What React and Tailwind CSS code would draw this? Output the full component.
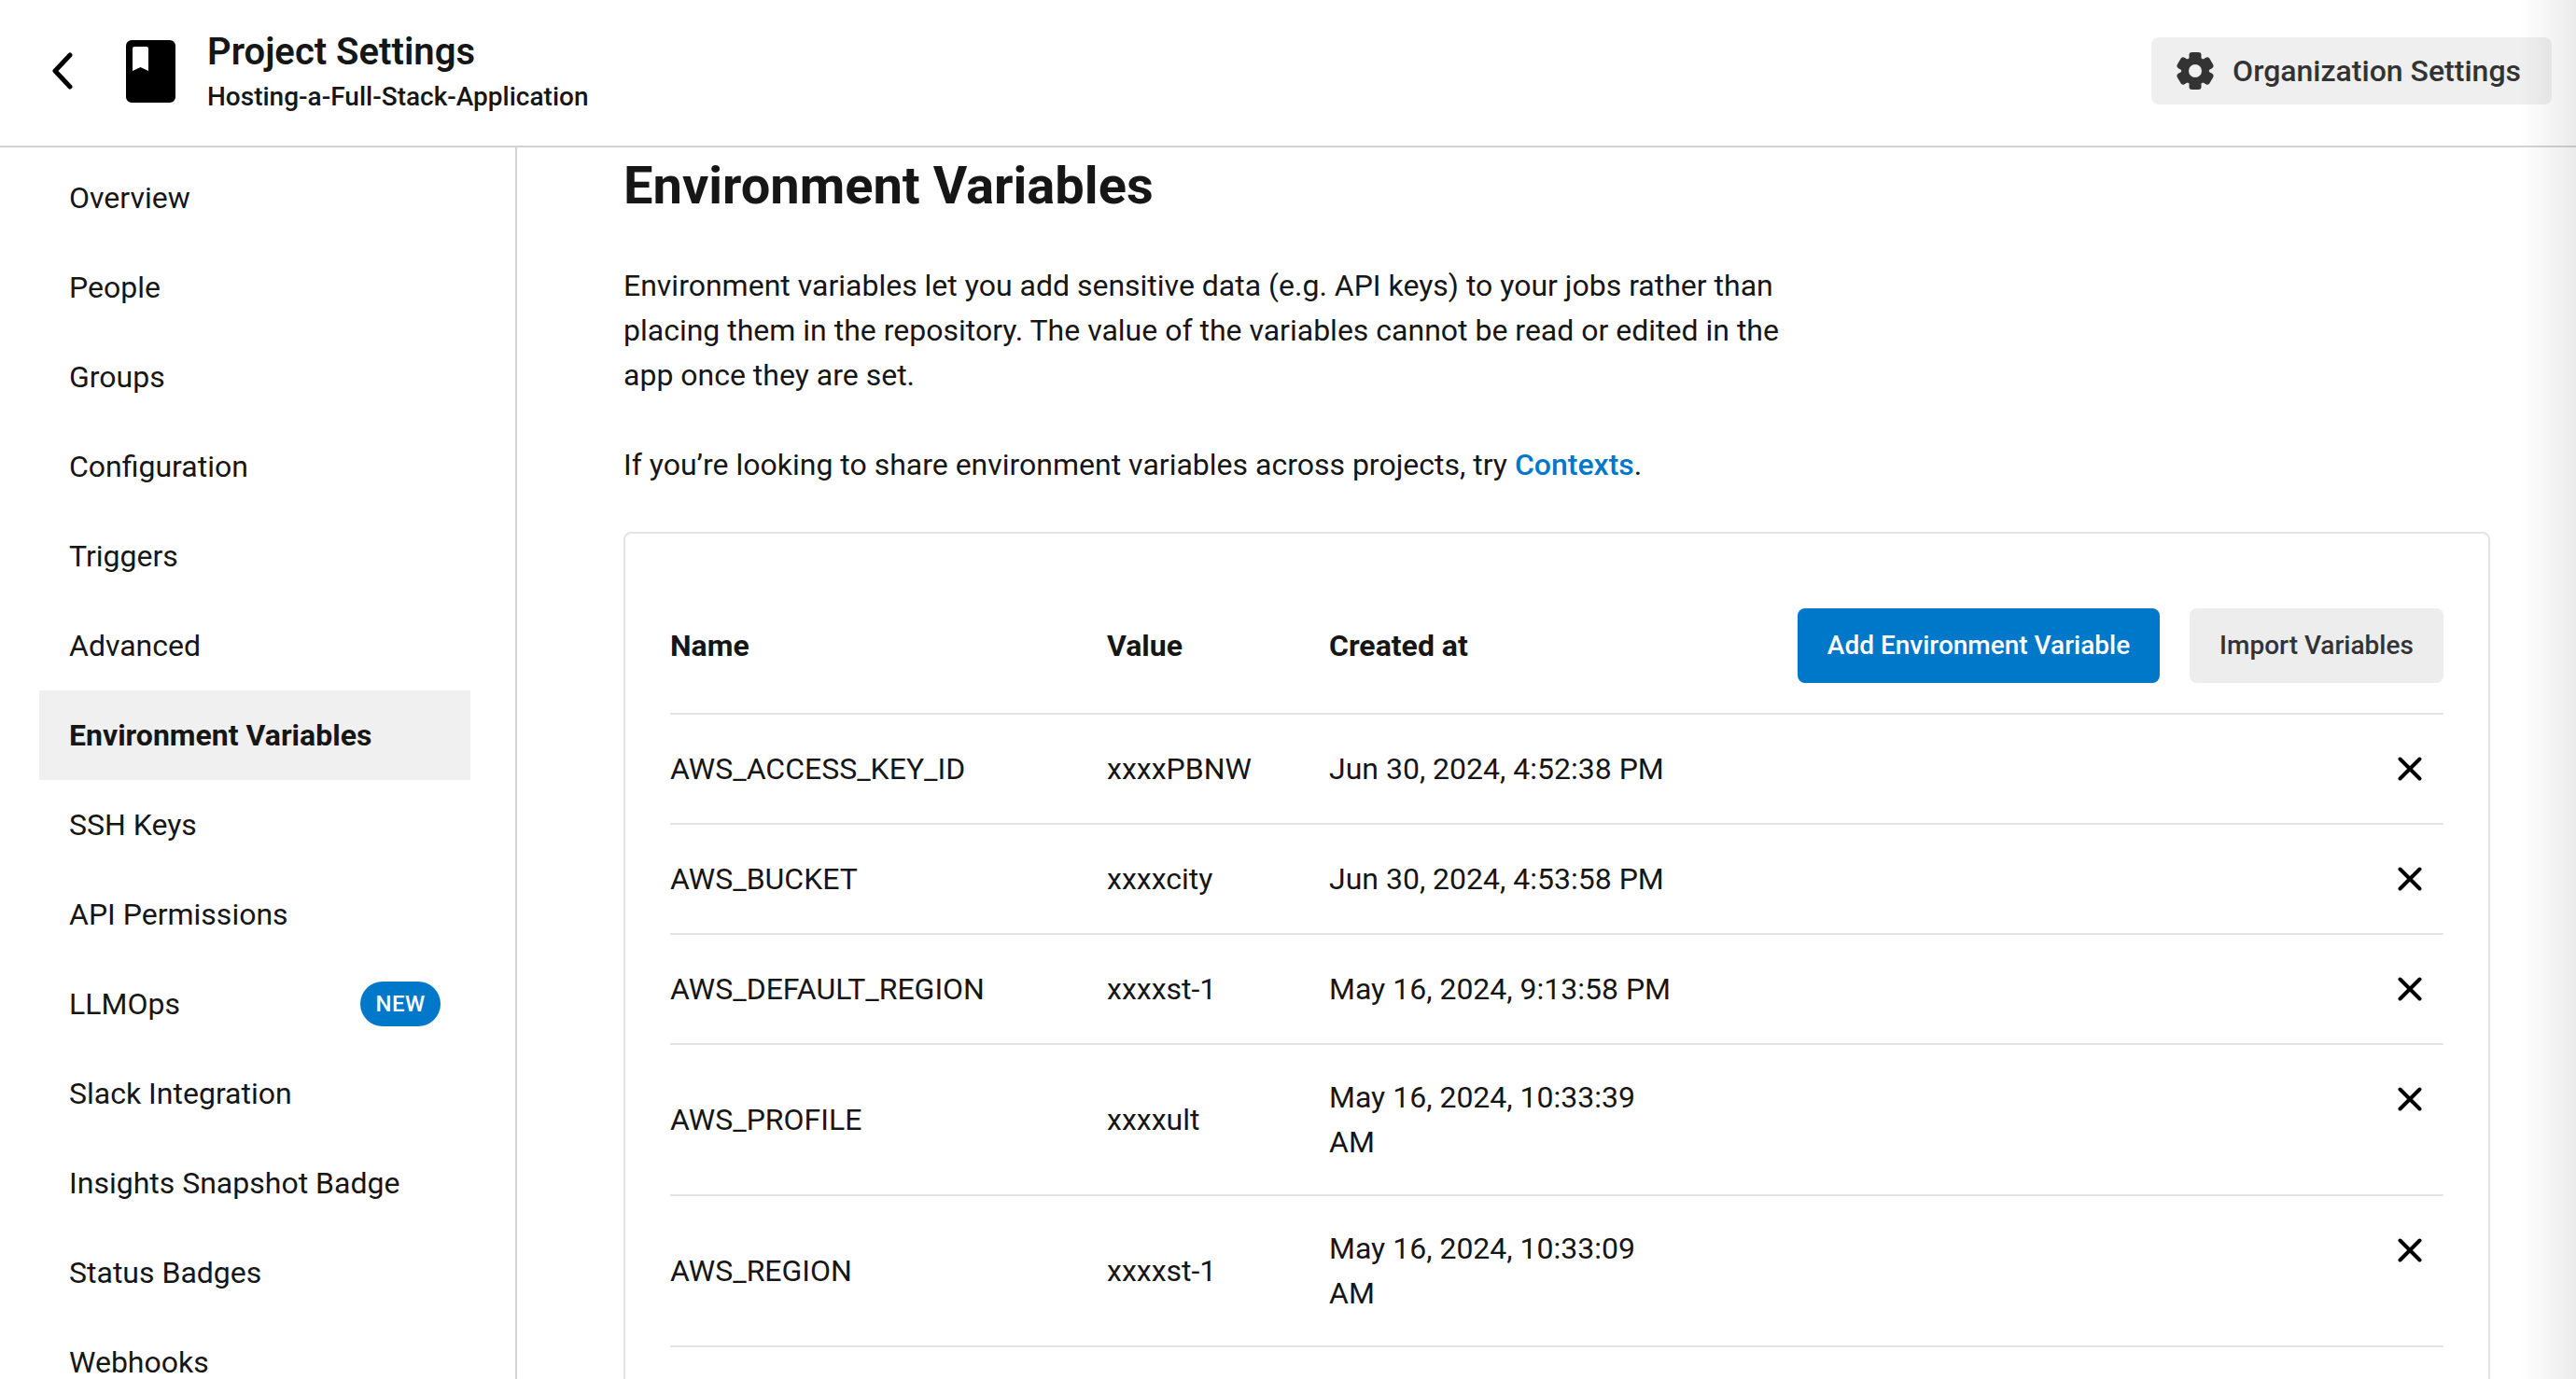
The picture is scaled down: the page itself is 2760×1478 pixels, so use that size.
const NAV = [
  "Overview",
  "People",
  "Groups",
  "Configuration",
  "Triggers",
  "Advanced",
  "Environment Variables",
  "SSH Keys",
  "API Permissions",
  "LLMOps",
  "Slack Integration",
  "Insights Snapshot Badge",
  "Status Badges",
  "Webhooks",
];

const ROWS = [
  { name: "AWS_ACCESS_KEY_ID", value: "xxxxPBNW", created: "Jun 30, 2024, 4:52:38 PM" },
  { name: "AWS_BUCKET", value: "xxxxcity", created: "Jun 30, 2024, 4:53:58 PM" },
  { name: "AWS_DEFAULT_REGION", value: "xxxxst-1", created: "May 16, 2024, 9:13:58 PM" },
  { name: "AWS_PROFILE", value: "xxxxult", created: "May 16, 2024, 10:33:39 AM" },
  { name: "AWS_REGION", value: "xxxxst-1", created: "May 16, 2024, 10:33:09 AM" },
];

function BookIcon() {
  return (
    <svg width="53" height="67" viewBox="0 0 53 67">
      <path
        fillRule="evenodd"
        fill="#000"
        d="M6 0h41a6 6 0 0 1 6 6v55a6 6 0 0 1-6 6H6a6 6 0 0 1-6-6V6a6 6 0 0 1 6-6zM7 9v24l8.500-4 8.500 4V9a2 2 0 0 0-2-2H9a2 2 0 0 0-2 2z"
      />
    </svg>
  );
}

function GearIcon() {
  return (
    <svg width="40" height="40" viewBox="0 0 40 40" className="shrink-0">
      <g fill="#333">
        {[0, 60, 120, 180, 240, 300].map((deg) => (
          <rect key={deg} x="13.500" y="0" width="13" height="12" rx="3" transform={`rotate(${deg} 20 20)`} />
        ))}
        <circle cx="20" cy="20" r="15" />
      </g>
      <circle cx="20" cy="20" r="7" fill="#efefef" />
    </svg>
  );
}

function CloseIcon() {
  return (
    <svg width="26" height="26" viewBox="0 0 26 26" fill="none" stroke="#000" strokeWidth="4" strokeLinecap="round">
      <path d="M2.500 2.500l21 21M23.500 2.500l-21 21" />
    </svg>
  );
}

export default function App() {
  return (
    <div className="relative h-[1478px] overflow-hidden bg-white font-['Roboto',sans-serif] text-[32px] leading-[48px] text-[#161616]">
      <header className="flex h-[158px] items-center border-b-2 border-[#d4d4d4] pb-[4px] pl-[55px] pr-[26px]">
        <svg width="26" height="40" viewBox="0 0 26 40" fill="none" stroke="#000" strokeWidth="5" strokeLinecap="round" strokeLinejoin="round">
          <path d="M20 3L4 20l16 17" />
        </svg>
        <div className="ml-[54px]">
          <BookIcon />
        </div>
        <div className="ml-[34px] mt-[4px] flex flex-col gap-[4px]">
          <div className="text-[40px] leading-[48px] font-semibold">Project Settings</div>
          <div className="text-[28px] leading-[40px] font-medium">Hosting-a-Full-Stack-Application</div>
        </div>
        <button className="ml-auto flex h-[72px] items-center gap-[20px] rounded-[8px] bg-[#efefef] pl-[27px] pr-[33px] text-[32px] font-medium text-[#333]">
          <GearIcon />
          Organization Settings
        </button>
      </header>

      <div className="flex h-[1320px]">
        <nav className="w-[554px] shrink-0 border-r-2 border-[#d4d4d4] pt-[6px] pl-[42px] pr-[48px]">
          {NAV.map((item) => (
            <div
              key={item}
              className={`flex h-[96px] items-center justify-between px-[32px] ${
                item === "Environment Variables" ? "bg-[#f0f0f0] font-bold" : ""
              }`}
            >
              {item}
              {item === "LLMOps" && (
                <span className="flex h-[48px] w-[86px] items-center justify-center rounded-full bg-[#0078ca] text-[24px] font-medium tracking-[0.5px] text-white">
                  NEW
                </span>
              )}
            </div>
          ))}
        </nav>

        <main className="min-w-0 flex-1 pl-[114px] pr-[92px]">
          <h1 className="mt-[9px] text-[56px] leading-[64px] font-bold">Environment Variables</h1>
          <p className="mt-[51px] w-[1260px]">
            Environment variables let you add sensitive data (e.g. API keys) to your jobs rather than placing them in
            the repository. The value of the variables cannot be read or edited in the app once they are set.
          </p>
          <p className="mt-[48px]">
            If you’re looking to share environment variables across projects, try{" "}
            <span className="font-medium text-[#0078ca]">Contexts</span>.
          </p>

          <section className="mt-[48px] rounded-[8px] border-2 border-[#e3e3e3] px-[48px] pt-[80px] pb-[120px]">
            <div className="flex items-center border-b-2 border-[#e3e3e3] pb-[32px] font-bold">
              <div className="w-[468px]">Name</div>
              <div className="w-[238px]">Value</div>
              <div>Created at</div>
              <button className="ml-auto flex h-[80px] w-[388px] items-center justify-center rounded-[8px] bg-[#0078ca] text-[28px] font-medium text-white">
                Add Environment Variable
              </button>
              <button className="ml-[32px] flex h-[80px] w-[272px] items-center justify-center rounded-[8px] bg-[#ededed] text-[28px] font-medium text-[#333]">
                Import Variables
              </button>
            </div>
            {ROWS.map((row) => (
              <div key={row.name} className="flex min-h-[118px] items-center border-b-2 border-[#e3e3e3] py-[32px]">
                <div className="w-[468px]">{row.name}</div>
                <div className="w-[238px]">{row.value}</div>
                <div className="w-[376px]">{row.created}</div>
                <div className="ml-auto mr-[23px] self-start pt-[13px]">
                  <CloseIcon />
                </div>
              </div>
            ))}
          </section>
        </main>
      </div>

      <div className="pointer-events-none absolute inset-y-0 right-0 w-[60px] bg-gradient-to-r from-transparent to-[#00000014]" />
    </div>
  );
}
